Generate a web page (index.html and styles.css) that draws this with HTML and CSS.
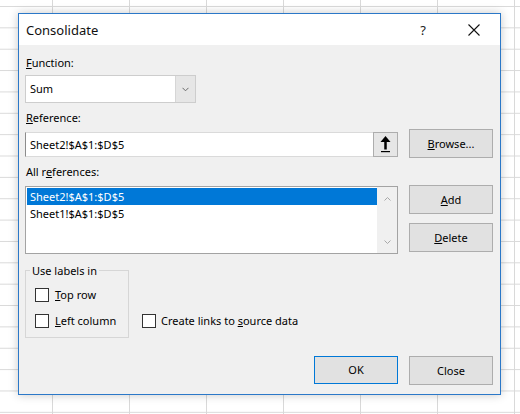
FILE: index.html
```html
<!DOCTYPE html>
<html>
<head>
<meta charset="utf-8">
<title>Consolidate</title>
<link rel="stylesheet" href="styles.css">
</head>
<body>
<div class="dialog">
  <div class="titlebar">
    <span class="title">Consolidate</span>
    <span class="help">?</span>
    <span class="close-x">
      <svg width="12" height="12" viewBox="0 0 12 12"><path d="M0.5 0.5 L11.5 11.5 M11.5 0.5 L0.5 11.5" stroke="#111" stroke-width="1.1" fill="none"/></svg>
    </span>
  </div>
  <div class="content">
    <div class="label lbl-function"><u>F</u>unction:</div>
    <div class="combo">
      <span class="combo-text">Sum</span>
      <span class="combo-btn"><svg width="7" height="5" viewBox="0 0 7 5"><polyline points="0.5,0.8 3.5,3.8 6.5,0.8" stroke="#6a6a6a" stroke-width="1" fill="none"/></svg></span>
    </div>

    <div class="label lbl-ref"><u>R</u>eference:</div>
    <div class="ref-row">
      <div class="ref-field">
        <div class="textbox">Sheet2!$A$1:$D$5</div>
        <div class="collapse-btn">
          <svg width="23" height="23" viewBox="0 0 23 23">
            <polygon points="11.5,3 6.5,9 16.5,9" fill="#000"/>
            <rect x="10.25" y="8" width="2.5" height="8.5" fill="#000"/>
            <rect x="7" y="18" width="9" height="1.2" fill="#000"/>
          </svg>
        </div>
      </div>
      <div class="btn"><span><u>B</u>rowse...</span></div>
    </div>

    <div class="label lbl-all">All r<u>e</u>ferences:</div>
    <div class="list-row">
      <div class="listbox">
        <div class="items">
          <div class="item selected">Sheet2!$A$1:$D$5</div>
          <div class="item">Sheet1!$A$1:$D$5</div>
        </div>
        <div class="scrollbar">
          <svg width="7" height="4" viewBox="0 0 7 4"><polyline points="0.5,3.5 3.5,0.5 6.5,3.5" stroke="#a8a8a8" stroke-width="1" fill="none"/></svg>
          <svg width="7" height="4" viewBox="0 0 7 4"><polyline points="0.5,0.5 3.5,3.5 6.5,0.5" stroke="#a8a8a8" stroke-width="1" fill="none"/></svg>
        </div>
      </div>
      <div class="side-buttons">
        <div class="btn"><span><u>A</u>dd</span></div>
        <div class="btn btn-delete"><span><u>D</u>elete</span></div>
      </div>
    </div>

    <div class="options">
      <div class="group">
        <div class="legend">Use labels in</div>
        <div class="check check-top"><span class="box"></span><span><u>T</u>op row</span></div>
        <div class="check check-left"><span class="box"></span><span><u>L</u>eft column</span></div>
      </div>
      <div class="check check-links"><span class="box"></span><span>Create links to <u>s</u>ource data</span></div>
    </div>

    <div class="footer">
      <div class="btn btn-default"><span>OK</span></div>
      <div class="btn"><span>Close</span></div>
    </div>
  </div>
</div>
</body>
</html>
```

FILE: styles.css
```css
html, body {
  margin: 0;
}
body {
  width: 520px;
  height: 414px;
  overflow: hidden;
  box-sizing: border-box;
  padding: 13px 0 0 18px;
  background-color: #ffffff;
  background-image:
    linear-gradient(to right, #d9d9d9 1px, transparent 1px),
    linear-gradient(to bottom, #d9d9d9 1px, transparent 1px);
  background-size: 77px 100%, 100% 21.37px;
  background-position: 52px 0, 0 6px;
  font-family: "Noto Sans", "Open Sans", sans-serif;
  font-size: 11px;
  line-height: 16px;
  color: #000;
}
u { text-decoration: underline; text-underline-offset: 1px; }

.dialog {
  width: 483px;
  height: 382px;
  box-sizing: border-box;
  border: 1px solid #2b78c8;
  background: #f0f0f0;
  box-shadow: 0 0 9px rgba(0, 0, 0, 0.22);
  display: flex;
  flex-direction: column;
}

.titlebar {
  height: 31px;
  flex: none;
  background: #ffffff;
  display: flex;
  align-items: center;
  padding-left: 7px;
  padding-right: 14px;
}
.title {
  flex: 1;
  font-size: 13px;
  color: #111;
}
.help {
  width: 20px;
  text-align: center;
  font-size: 13px;
  color: #222;
}
.close-x {
  width: 24px;
  margin-left: 29px;
  display: flex;
  justify-content: center;
}

.content {
  padding: 0 7px 0 6px;
}
.label {
  height: 16px;
  line-height: 16px;
  padding-left: 1px;
}
.lbl-function { margin-top: 10px; }
.lbl-ref { margin-top: 7px; }
.lbl-all { margin-top: 6px; }

.combo {
  margin-top: 4px;
  width: 171px;
  height: 28px;
  box-sizing: border-box;
  border: 1px solid #cdcdcd;
  background: #fff;
  display: flex;
}
.combo-text {
  flex: 1;
  padding-left: 4px;
  line-height: 26px;
}
.combo-btn {
  width: 19px;
  background: #e6e6e6;
  border-left: 1px solid #d6d6d6;
  display: flex;
  align-items: center;
  justify-content: center;
}

.ref-row {
  margin-top: 3px;
  display: flex;
  align-items: flex-start;
  gap: 11px;
}
.ref-field {
  width: 373px;
  height: 25px;
  margin-top: 3px;
  display: flex;
}
.textbox {
  flex: 1;
  box-sizing: border-box;
  background: #fff;
  border: 1px solid #dadada;
  border-left-color: #8c8c8c;
  border-right: none;
  padding-left: 4px;
  line-height: 23px;
}
.collapse-btn {
  width: 25px;
  height: 25px;
  box-sizing: border-box;
  border: 1px solid #adadad;
  background: #e6e6e6;
  display: flex;
  align-items: center;
  justify-content: center;
}

.btn {
  width: 84px;
  height: 29px;
  box-sizing: border-box;
  border: 1px solid #adadad;
  background: #e1e1e1;
  display: flex;
  align-items: center;
  justify-content: center;
}
.btn-default {
  border-color: #0078d7;
  height: 28px;
}

.list-row {
  margin-top: 5px;
  display: flex;
  align-items: flex-start;
  gap: 11px;
}
.listbox {
  width: 373px;
  height: 68px;
  margin-top: 1px;
  box-sizing: border-box;
  border: 1px solid #a3a3a3;
  background: #fff;
  display: flex;
}
.items {
  flex: 1;
  padding: 1px 0 0 1px;
}
.item {
  height: 17px;
  line-height: 17px;
  padding-left: 3px;
}
.item.selected {
  background: #0078d7;
  color: #fff;
}
.scrollbar {
  width: 20px;
  background: #f0f0f0;
  display: flex;
  flex-direction: column;
  align-items: center;
  justify-content: space-between;
  padding: 10px 0 9px;
  box-sizing: border-box;
}
.side-buttons {
  display: flex;
  flex-direction: column;
  gap: 9px;
}

.options {
  margin-top: 16px;
  display: flex;
  align-items: flex-start;
}
.group {
  width: 104px;
  box-sizing: border-box;
  border: 1px solid #d6d6d6;
  padding: 0 0 8px 9px;
}
.legend {
  display: block;
  width: max-content;
  margin: -8px 0 0 -5px;
  padding: 0 2px;
  height: 16px;
  line-height: 16px;
  background: #f0f0f0;
}
.check {
  display: flex;
  align-items: center;
  gap: 6px;
  height: 16px;
  line-height: 16px;
  white-space: nowrap;
}
.check-top { margin-top: 8px; }
.check-left { margin-top: 10px; }
.check-links {
  margin-left: 13px;
  margin-top: 43px;
  gap: 5px;
}
.box {
  width: 14px;
  height: 14px;
  box-sizing: border-box;
  border: 1px solid #333;
  background: #fff;
  flex: none;
}

.footer {
  margin-top: 18px;
  display: flex;
  justify-content: flex-end;
  gap: 11px;
}
```
